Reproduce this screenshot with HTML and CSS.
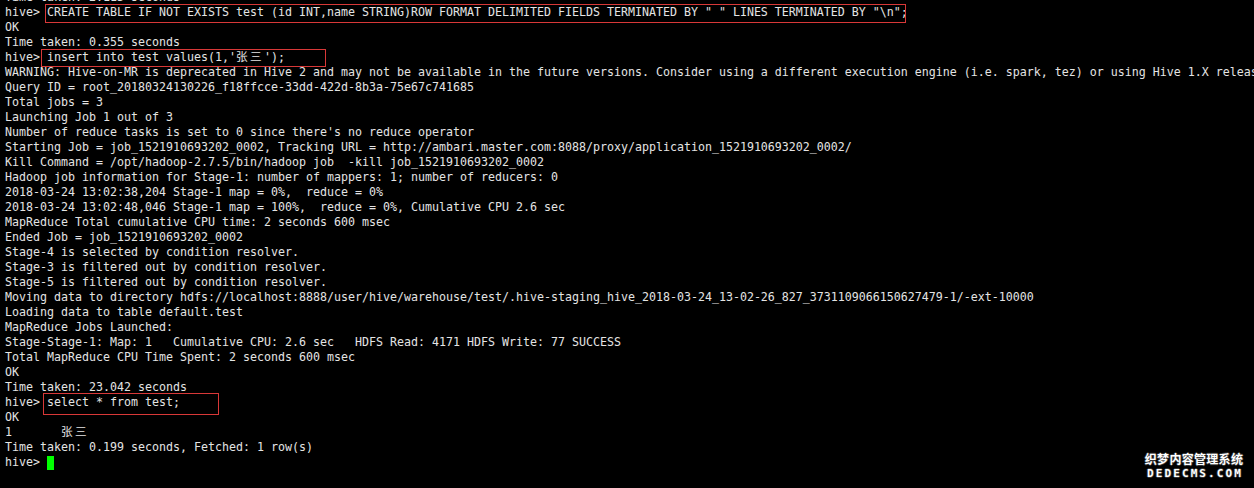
FILE: index.html
```html
<!DOCTYPE html>
<html lang="zh">
<head>
<meta charset="utf-8">
<title>hive</title>
<link rel="stylesheet" href="styles.css">
</head>
<body>
<main class="screen">
<pre class="term">Time taken: 2.113 seconds
hive> CREATE TABLE IF NOT EXISTS test (id INT,name STRING)ROW FORMAT DELIMITED FIELDS TERMINATED BY " " LINES TERMINATED BY "\n";
OK
Time taken: 0.355 seconds
hive> insert into test values(1,'<span class="w">张三</span>');
WARNING: Hive-on-MR is deprecated in Hive 2 and may not be available in the future versions. Consider using a different execution engine (i.e. spark, tez) or using Hive 1.X releases.
Query ID = root_20180324130226_f18ffcce-33dd-422d-8b3a-75e67c741685
Total jobs = 3
Launching Job 1 out of 3
Number of reduce tasks is set to 0 since there's no reduce operator
Starting Job = job_1521910693202_0002, Tracking URL = http://ambari.master.com:8088/proxy/application_1521910693202_0002/
Kill Command = /opt/hadoop-2.7.5/bin/hadoop job  -kill job_1521910693202_0002
Hadoop job information for Stage-1: number of mappers: 1; number of reducers: 0
2018-03-24 13:02:38,204 Stage-1 map = 0%,  reduce = 0%
2018-03-24 13:02:48,046 Stage-1 map = 100%,  reduce = 0%, Cumulative CPU 2.6 sec
MapReduce Total cumulative CPU time: 2 seconds 600 msec
Ended Job = job_1521910693202_0002
Stage-4 is selected by condition resolver.
Stage-3 is filtered out by condition resolver.
Stage-5 is filtered out by condition resolver.
Moving data to directory hdfs://localhost:8888/user/hive/warehouse/test/.hive-staging_hive_2018-03-24_13-02-26_827_3731109066150627479-1/-ext-10000
Loading data to table default.test
MapReduce Jobs Launched:
Stage-Stage-1: Map: 1   Cumulative CPU: 2.6 sec   HDFS Read: 4171 HDFS Write: 77 SUCCESS
Total MapReduce CPU Time Spent: 2 seconds 600 msec
OK
Time taken: 23.042 seconds
hive> select * from test;
OK
1       <span class="w">张三</span>
Time taken: 0.199 seconds, Fetched: 1 row(s)
hive> <span class="cursor"></span></pre>
<div class="mark mark-create"></div>
<div class="mark mark-insert"></div>
<div class="mark mark-select"></div>
<div class="watermark">
  <span class="wm-cn">织梦内容管理系统</span>
  <span class="wm-en">DEDECMS.COM</span>
</div>
</main>
</body>
</html>
```

FILE: styles.css
```css
html, body {
  margin: 0;
  padding: 0;
  background: #000;
}

.screen {
  position: relative;
  width: 1254px;
  height: 488px;
  overflow: hidden;
  background: #000;
}

.term {
  margin: -10px 0 0 0;
  padding: 0 0 0 5px;
  font-family: "DejaVu Sans Mono", "Noto Sans CJK SC", monospace;
  font-size: 11.63px;
  line-height: 15px;
  color: #e4e4e4;
  white-space: pre;
}

.w {
  font-family: "Noto Sans CJK SC", sans-serif;
  font-size: 11.63px;
  letter-spacing: 2.37px;
  line-height: 0;
}

.cursor {
  display: inline-block;
  width: 7px;
  height: 14px;
  background: #00ff00;
  vertical-align: -4px;
}

.mark {
  position: absolute;
  border: 1px solid #d83838;
  box-sizing: border-box;
}

.mark-create {
  left: 45px;
  top: 4px;
  width: 861px;
  height: 19px;
}

.mark-insert {
  left: 41px;
  top: 49px;
  width: 285px;
  height: 18px;
}

.mark-select {
  left: 43px;
  top: 393px;
  width: 176px;
  height: 22px;
}

.watermark {
  position: absolute;
  left: 1144px;
  top: 451px;
  width: 100px;
  display: flex;
  flex-direction: column;
  align-items: center;
  color: #fff;
  text-shadow: 1px 0 0 #333, -1px 0 0 #333, 0 1px 0 #333, 0 -1px 0 #333;
}

.wm-cn {
  font-family: "Noto Sans CJK SC", sans-serif;
  font-size: 12px;
  font-weight: 700;
  line-height: 16px;
  letter-spacing: 0.3px;
}

.wm-en {
  font-family: "DejaVu Sans Mono", monospace;
  font-size: 11px;
  font-weight: 700;
  line-height: 13px;
  letter-spacing: 2.1px;
  margin-right: -2px;
}
```
